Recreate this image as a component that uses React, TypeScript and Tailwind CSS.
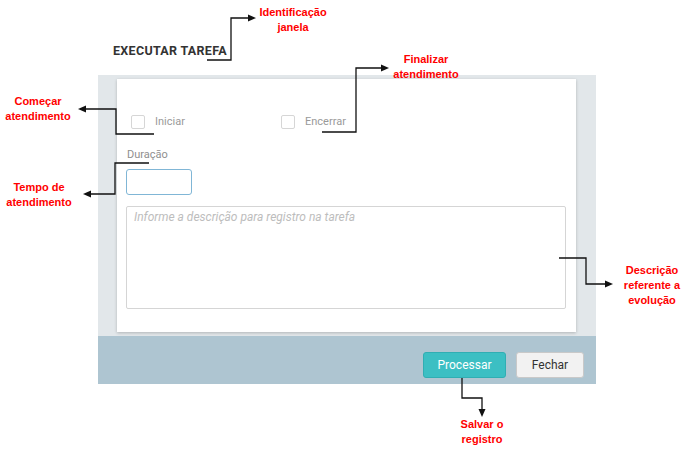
import React from "react";

// notes on the screenshot: red labels + black elbow arrows
const NOTES = [
  { lines: ["Identificação", "janela"], left: 252, top: 5, width: 82 },
  { lines: ["Começar", "atendimento"], left: 0, top: 94, width: 76 },
  { lines: ["Finalizar", "atendimento"], left: 388, top: 52, width: 76 },
  { lines: ["Tempo de", "atendimento"], left: 1, top: 180, width: 76 },
  { lines: ["Descrição", "referente a", "evolução"], left: 614, top: 263, width: 76 },
  { lines: ["Salvar o", "registro"], left: 444, top: 417, width: 76 },
];

const ARROWS = [
  { d: "M207 60 H231 V18 H250", tip: "256,18 248,14.5 248,21.5" },
  { d: "M154 134 H116 V109 H85", tip: "78,109 86,105.5 86,112.5" },
  { d: "M322 132 H356 V68 H382", tip: "389,68 381,64.5 381,71.5" },
  { d: "M149 163 H115 V194 H90", tip: "83,194 91,190.5 91,197.5" },
  { d: "M559 258 H586 V284 H606", tip: "613,284 605,280.5 605,287.5" },
  { d: "M462 378 V398 H482 V410", tip: "482,417 478.5,409 485.5,409" },
];

function Checkbox({ label }: { label: string }) {
  return (
    <label className="flex items-center gap-[10px]">
      <span className="w-[14px] h-[14px] border border-[#d6d6d6] rounded-[2px] bg-white" />
      <span className="text-[11px] leading-[14px] text-[#9a9a9a]">{label}</span>
    </label>
  );
}

export default function App() {
  return (
    <div className="relative w-[687px] h-[449px] bg-white overflow-hidden" style={{ fontFamily: "Roboto, 'Liberation Sans', sans-serif" }}>
      <div className="pt-[43px] pl-[98px]">
        <h1 className="ml-[15px] h-4 text-[12.5px] leading-[16px] font-bold text-[#333] tracking-[0.3px]">EXECUTAR TAREFA</h1>

        <div className="mt-[16px] w-[498px]">
          <div className="bg-[#e2e7ea] pt-[4px] pl-[19px] pr-[20px] pb-[4px]">
            <div className="h-[253px] bg-white shadow-[0_1px_3px_rgba(0,0,0,0.22)] pl-[9px] pr-[10px] flex flex-col">
              <div className="mt-[36px] h-[14px] pl-[5px] flex items-center">
                <div className="w-[150px]">
                  <Checkbox label="Iniciar" />
                </div>
                <Checkbox label="Encerrar" />
              </div>

              <div className="mt-[19px] pl-[1px] text-[11px] leading-[13px] text-[#8f8f8f]">Duração</div>
              <input
                className="mt-[8px] w-[66px] h-[26px] border border-[#80b6d6] rounded-[3px] outline-none"
                type="text"
              />
              <textarea
                className="mt-[11px] w-full h-[103px] border border-[#d5d5d5] rounded-[2px] resize-none outline-none px-[7px] pt-[3px] text-[12px] leading-[14px] italic placeholder:text-[#bdbdbd]"
                placeholder="Informe a descrição para registro na tarefa"
              />
            </div>
          </div>

          <div className="h-[48px] bg-[#aec5d1] flex justify-end items-start pt-[16px] pr-[12px] gap-[10px]">
            <button className="w-[83px] h-[26px] bg-[#3cbfc3] border border-[#30aeb3] rounded-[3px] text-white text-[12px]">
              Processar
            </button>
            <button className="w-[68px] h-[26px] bg-[#f2f2f2] border border-[#c9c9c9] rounded-[3px] text-[#333] text-[12px]">
              Fechar
            </button>
          </div>
        </div>
      </div>

      <svg className="absolute inset-0 w-full h-full pointer-events-none" viewBox="0 0 687 449">
        {ARROWS.map((a, i) => (
          <g key={i}>
            <path d={a.d} fill="none" stroke="#111" strokeWidth="1.3" />
            <polygon points={a.tip} fill="#111" />
          </g>
        ))}
      </svg>

      {NOTES.map((n, i) => (
        <div
          key={i}
          className="absolute text-center text-[11px] leading-[15px] font-bold text-[#ff0000]"
          style={{ left: n.left, top: n.top, width: n.width, fontFamily: "'Liberation Sans', Arial, sans-serif" }}
        >
          {n.lines.map((l) => (
            <div key={l}>{l}</div>
          ))}
        </div>
      ))}
    </div>
  );
}
